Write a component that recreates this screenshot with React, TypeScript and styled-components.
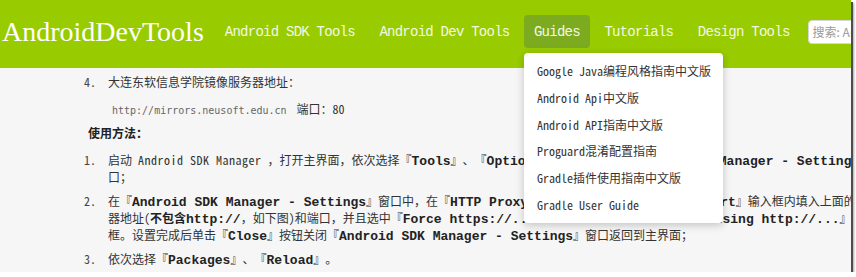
import styled, { createGlobalStyle } from 'styled-components';

const SONG = `"Noto Sans Mono CJK SC", "Liberation Mono", "Noto Sans CJK SC", monospace`;

const Global = createGlobalStyle`
    html, body {
        margin: 0;
        padding: 0;
        background: #fff;
    }
`;

const Shot = styled.div`
    position: relative;
    width: 851px;
    height: 272px;
    overflow: hidden;
    background: #f6f6f6;
    box-shadow: 2px 2px 0 #4d4d4d, 3px 3px 2px rgba(0, 0, 0, 0.35);
`;

const Header = styled.header`
    display: flex;
    align-items: center;
    height: 68px;
    box-sizing: border-box;
    padding: 0 0 5px 2px;
    background: #99cc00;
    white-space: nowrap;
`;

const Logo = styled.a`
    flex: none;
    font-family: "Liberation Serif", serif;
    font-size: 28px;
    color: #fff;
    margin-right: 11px;
`;

const Nav = styled.nav`
    flex: none;
    display: flex;
    column-gap: 4.5px;
`;

const NavEntry = styled.div`
    position: relative;
`;

const NavItem = styled.a<{ $active?: boolean }>`
    display: block;
    height: 33px;
    box-sizing: border-box;
    padding: 2px 10px 0;
    line-height: 31px;
    border-radius: 4px;
    font-family: "Liberation Mono", monospace;
    font-size: 14px;
    letter-spacing: -0.75px;
    color: #f3f8e6;
    background: ${p => (p.$active ? '#7dab1f' : 'transparent')};
`;

const Dropdown = styled.div`
    position: absolute;
    z-index: 2;
    top: 38px;
    left: 0;
    width: 199px;
    padding: 5px 0 4px;
    background: #fff;
    border-radius: 4px;
    box-shadow: 0 2px 8px rgba(0, 0, 0, 0.22);
`;

const MenuItem = styled.div`
    height: 26.8px;
    line-height: 26.8px;
    padding-left: 13px;
    font-family: ${SONG};
    font-size: 12px;
    color: #333;
    text-spacing-trim: space-all;
`;

const Search = styled.input`
    flex: none;
    margin-left: 8px;
    width: 170px;
    height: 24px;
    box-sizing: border-box;
    padding: 0 4px;
    border: 1px solid #d8d8d8;
    border-radius: 4px;
    background: #fff;
    font-family: "Noto Sans CJK SC", sans-serif;
    font-size: 12px;
    &::placeholder {
        color: #999;
    }
`;

const Main = styled.main`
    padding: 5px 0 0 84px;
    font-family: ${SONG};
    font-size: 12px;
    color: #333;
    white-space: nowrap;
    text-spacing-trim: space-all;
`;

const Item = styled.div`
    display: flex;
    line-height: 17px;
    & + & {
        margin-top: 7px;
    }
`;

const Num = styled.span`
    flex: none;
    width: 24px;
    color: #444;
`;

const Body = styled.div``;

const UrlLine = styled.div`
    margin: 10px 0 0 28px;
    line-height: 17px;
`;

const Code = styled.code`
    font-family: "DejaVu Sans Mono", monospace;
    font-size: 10px;
    line-height: 12px;
    color: #666;
    margin-right: 10px;
`;

const Heading = styled.div`
    margin: 7px 0 0 4px;
    line-height: 17px;
    font-weight: 700;
    color: #222;
`;

const Steps = styled.div`
    margin-top: 10px;
`;

const Term = styled.span`
    letter-spacing: 0.5px;
`;

const B = styled.b`
    font-family: "Liberation Mono", "Noto Sans CJK SC", monospace;
    font-size: 13px;
    line-height: 12px;
    font-weight: 700;
    color: #222;
`;

const Strong = styled.b`
    font-weight: 700;
    color: #222;
`;

const guides = [
    'Google Java编程风格指南中文版',
    'Android Api中文版',
    'Android API指南中文版',
    'Proguard混淆配置指南',
    'Gradle插件使用指南中文版',
    'Gradle User Guide',
];

const App = () => <>
    <Global />
    <Shot>
        <Header>
            <Logo>AndroidDevTools</Logo>
            <Nav>
                <NavEntry><NavItem>Android SDK Tools</NavItem></NavEntry>
                <NavEntry><NavItem>Android Dev Tools</NavItem></NavEntry>
                <NavEntry>
                    <NavItem $active>Guides</NavItem>
                    <Dropdown>
                        {guides.map(g => <MenuItem key={g}>{g}</MenuItem>)}
                    </Dropdown>
                </NavEntry>
                <NavEntry><NavItem>Tutorials</NavItem></NavEntry>
                <NavEntry><NavItem>Design Tools</NavItem></NavEntry>
            </Nav>
            <Search placeholder="搜索: Android Studio" />
        </Header>
        <Main>
            <Item>
                <Num>4.</Num>
                <Body>大连东软信息学院镜像服务器地址：</Body>
            </Item>
            <UrlLine>
                <Code>http://mirrors.neusoft.edu.cn</Code>端口：80
            </UrlLine>
            <Heading>使用方法：</Heading>
            <Steps>
                <Item>
                    <Num>1.</Num>
                    <Body>
                        启动 <Term>Android SDK Manager</Term> ，打开主界面，依次选择『<B>Tools</B>』、『<B>Options</B>』菜单，打开『<B>Android SDK Manager - Settings</B>』窗<br />
                        口；
                    </Body>
                </Item>
                <Item>
                    <Num>2.</Num>
                    <Body>
                        在『<B>Android SDK Manager - Settings</B>』窗口中，在『<B>HTTP Proxy Server</B>』和『<B>HTTP Proxy Port</B>』输入框内填入上面的镜像服务<br />
                        器地址(<Strong>不包含</Strong><B>http://</B>，如下图)和端口，并且选中『<B>Force https://... sources to be fetched using http://...</B>』复选<br />
                        框。设置完成后单击『<B>Close</B>』按钮关闭『<B>Android SDK Manager - Settings</B>』窗口返回到主界面；
                    </Body>
                </Item>
                <Item>
                    <Num>3.</Num>
                    <Body>依次选择『<B>Packages</B>』、『<B>Reload</B>』。</Body>
                </Item>
            </Steps>
        </Main>
    </Shot>
</>;

export default App;
